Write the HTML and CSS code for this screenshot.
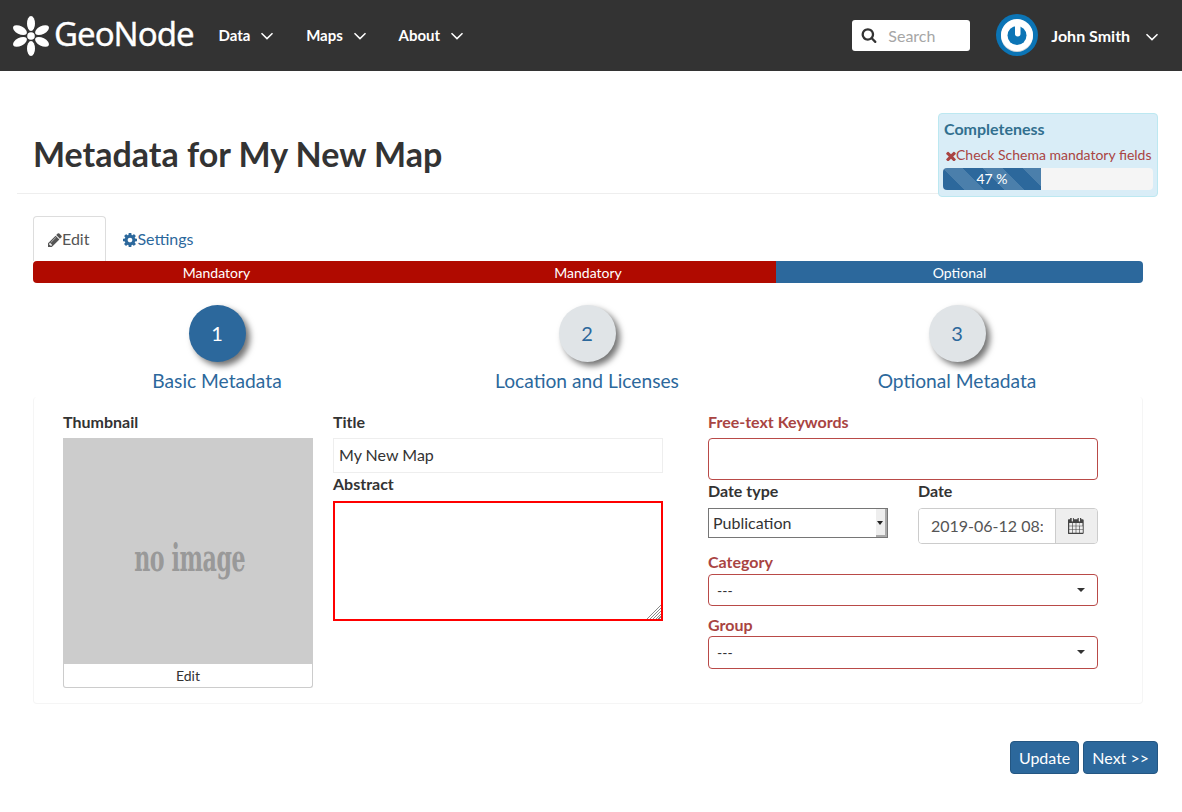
FILE: index.html

```html
<!DOCTYPE html>
<html lang="en">
<head>
  <meta charset="UTF-8" />
  <meta name="viewport" content="width=device-width, initial-scale=1.0" />
  <title>Metadata for My New Map</title>
  <link rel="stylesheet" href="styles.css">
</head>
<body>
  <header class="navbar">
    <a class="brand" href="#">
      <svg class="brand-mark" viewBox="0 0 38 40" aria-hidden="true">
        <g fill="#fff">
          <ellipse cx="19" cy="7.500" rx="4" ry="7.500" />
          <ellipse cx="19" cy="32.500" rx="4" ry="7.500" />
          <ellipse cx="19" cy="7.500" rx="4" ry="7.500" transform="rotate(62 19 20)" />
          <ellipse cx="19" cy="7.500" rx="4" ry="7.500" transform="rotate(118 19 20)" />
          <ellipse cx="19" cy="7.500" rx="4" ry="7.500" transform="rotate(242 19 20)" />
          <ellipse cx="19" cy="7.500" rx="4" ry="7.500" transform="rotate(298 19 20)" />
          <circle cx="19" cy="20" r="3.800" />
        </g>
      </svg>
      <span class="brand-name">GeoNode</span>
    </a>
    <nav class="nav-links">
      <a href="#">Data <svg class="chevron" viewBox="0 0 14 8"><path d="M1.5 1.2 7 6.6l5.5-5.4" /></svg></a>
      <a href="#">Maps <svg class="chevron" viewBox="0 0 14 8"><path d="M1.5 1.2 7 6.6l5.5-5.4" /></svg></a>
      <a href="#">About <svg class="chevron" viewBox="0 0 14 8"><path d="M1.5 1.2 7 6.6l5.5-5.4" /></svg></a>
    </nav>
    <div class="nav-right">
      <label class="search">
        <svg class="search-icon" viewBox="0 0 1792 1792"><path d="M1216 832q0-185-131.500-316.500t-316.500-131.500-316.500 131.500-131.500 316.500 131.500 316.500 316.500 131.500 316.500-131.500 131.500-316.500zm512 832q0 52-38 90t-90 38q-54 0-90-38l-343-342q-179 124-399 124-143 0-273.500-55.500t-225-150-150-225-55.500-273.500 55.500-273.500 150-225 225-150 273.500-55.500 273.500 55.500 225 150 150 225 55.500 273.500q0 220-124 399l343 343q37 37 37 90z" /></svg>
        <input type="text" placeholder="Search" />
      </label>
      <svg class="avatar" viewBox="0 0 42 42" aria-hidden="true">
        <circle cx="21" cy="21" r="21" fill="#0b74b5" />
        <circle cx="21" cy="22" r="16" fill="#cfd4d8" />
        <circle cx="21" cy="21" r="16" fill="#fff" />
        <circle cx="21" cy="21.500" r="9.500" fill="#0b74b5" />
        <rect x="19" y="5.500" width="5.500" height="17" rx="2.700" fill="#fff" />
      </svg>
      <a class="user" href="#">John Smith <svg class="chevron" viewBox="0 0 14 8"><path d="M1.5 1.2 7 6.6l5.5-5.4" /></svg></a>
    </div>
  </header>

  <div class="container">
    <div class="page-header">
      <h1>Metadata for My New Map</h1>
      <aside class="completeness">
        <h4>Completeness</h4>
        <p class="completeness-error">
          <svg class="icon" viewBox="280 280 1232 1296"><path d="M1490 1322q0 40-28 68l-136 136q-28 28-68 28t-68-28l-294-294-294 294q-28 28-68 28t-68-28l-136-136q-28-28-28-68t28-68l294-294-294-294q-28-28-28-68t28-68l136-136q28-28 68-28t68 28l294 294 294-294q28-28 68-28t68 28l136 136q28 28 28 68t-28 68l-294 294 294 294q28 28 28 68z" /></svg>Check Schema mandatory fields
        </p>
        <div class="progress"><div class="progress-bar" style="width: 46.700%">47 %</div></div>
      </aside>
    </div>

    <main class="content">
      <ul class="tabs">
        <li class="tab active">
          <a href="#"><svg class="icon" viewBox="128 128 1536 1536"><path d="M491 1536l91-91-235-235-91 91v107h128v128h107zm523-928q0-22-22-22-10 0-17 7l-542 542q-7 7-7 17 0 22 22 22 10 0 17-7l542-542q7-7 7-17zm-54-192l416 416-832 832h-416v-416zm683 96q0 53-37 90l-166 166-416-416 166-165q36-38 90-38 53 0 91 38l235 234q37 39 37 91z" /></svg>Edit</a>
        </li>
        <li class="tab">
          <a href="#"><svg class="icon" viewBox="128 128 1536 1536"><path d="M1152 896q0-106-75-181t-181-75-181 75-75 181 75 181 181 75 181-75 75-181zm512-109v222q0 12-8 23t-20 13l-185 28q-19 54-39 91 35 50 107 138 10 12 10 25t-9 23q-27 37-99 108t-94 71q-12 0-26-9l-138-108q-44 23-91 38-16 136-29 186-7 28-36 28h-222q-14 0-24.500-8.500t-11.500-21.500l-28-184q-49-16-90-37l-141 107q-10 9-25 9-14 0-25-11-126-114-165-168-7-10-7-23 0-12 8-23 15-21 51-66.500t54-70.500q-27-50-41-99l-183-27q-13-2-21-12.500t-8-23.500v-222q0-12 8-23t19-13l186-28q14-46 39-92-40-57-107-138-10-12-10-24 0-10 9-23 26-36 98.500-107.500t94.500-71.500q13 0 26 10l138 107q44-23 91-38 16-136 29-186 7-28 36-28h222q14 0 24.500 8.500t11.500 21.500l28 184q49 16 90 37l142-107q9-9 24-9 13 0 25 10 129 119 165 170 7 8 7 22 0 12-8 23-15 21-51 66.500t-54 70.500q26 50 41 98l183 28q13 2 21 12.500t8 23.500z" /></svg>Settings</a>
        </li>
      </ul>

      <div class="wizard-bar">
        <div class="wizard-seg seg-side mandatory">Mandatory</div>
        <div class="wizard-seg seg-middle mandatory">Mandatory</div>
        <div class="wizard-seg seg-side optional">Optional</div>
      </div>

      <div class="steps">
        <a class="step current" href="#"><span class="step-circle">1</span><span class="step-label">Basic Metadata</span></a>
        <a class="step" href="#"><span class="step-circle">2</span><span class="step-label">Location and Licenses</span></a>
        <a class="step" href="#"><span class="step-circle">3</span><span class="step-label">Optional Metadata</span></a>
      </div>

      <form class="panel">
        <div class="col-thumb">
          <label class="field-label">Thumbnail</label>
          <div class="thumb"><span class="no-image">no image</span></div>
          <button type="button" class="thumb-edit">Edit</button>
        </div>

        <div class="col-main">
          <label class="field-label">Title</label>
          <input class="input-title" type="text" value="My New Map" />
          <label class="field-label label-abstract">Abstract</label>
          <textarea class="input-abstract"></textarea>
        </div>

        <div class="col-side">
          <label class="field-label required">Free-text Keywords</label>
          <input class="input-keywords" type="text" />

          <div class="date-row">
            <div class="date-type">
              <label class="field-label">Date type</label>
              <div class="plain-select">
                <span>Publication</span>
                <span class="plain-select-arrow"></span>
              </div>
            </div>
            <div class="date-value">
              <label class="field-label">Date</label>
              <div class="date-group">
                <input type="text" value="2019-06-12 08:00 am" />
                <span class="date-addon">
                  <svg class="icon" viewBox="64 128 1664 1664"><path d="M192 1664h288v-288h-288v288zm352 0h320v-288h-320v288zm-352-352h288v-320h-288v320zm352 0h320v-320h-320v320zm-352-384h288v-288h-288v288zm736 736h320v-288h-320v288zm-384-736h320v-288h-320v288zm768 736h288v-288h-288v288zm-384-352h320v-320h-320v320zm-352-864v-288q0-13-9.500-22.500t-22.500-9.500h-64q-13 0-22.500 9.500t-9.500 22.500v288q0 13 9.500 22.500t22.500 9.500h64q13 0 22.500-9.500t9.500-22.500zm736 864h288v-320h-288v320zm-384-384h320v-288h-320v288zm352 0h288v-288h-288v288zm32-480v-288q0-13-9.500-22.500t-22.500-9.500h-64q-13 0-22.500 9.500t-9.500 22.500v288q0 13 9.500 22.500t22.500 9.500h64q13 0 22.500-9.500t9.500-22.500zm384-64v1280q0 52-38 90t-90 38h-1408q-52 0-90-38t-38-90v-1280q0-52 38-90t90-38h128v-96q0-66 47-113t113-47h64q66 0 113 47t47 113v96h384v-96q0-66 47-113t113-47h64q66 0 113 47t47 113v96h128q52 0 90 38t38 90z" /></svg>
                </span>
              </div>
            </div>
          </div>

          <label class="field-label required label-category">Category</label>
          <div class="drop">---</div>
          <label class="field-label required label-group">Group</label>
          <div class="drop">---</div>
        </div>
      </form>
    </main>

    <div class="actions">
      <button type="button" class="btn">Update</button>
      <button type="button" class="btn">Next &gt;&gt;</button>
    </div>
  </div>
</body>
</html>
```

FILE: styles.css

```css
* {
  box-sizing: border-box;
}
body {
  margin: 0;
  font-family: Lato, "Liberation Sans", sans-serif;
  font-size: 16px;
  color: #333;
  background: #fff;
}
a {
  text-decoration: none;
}

/* navbar */
.navbar {
  display: flex;
  align-items: center;
  height: 71px;
  padding: 0 23px 1px 12px;
  background: #333;
}
.brand {
  display: flex;
  align-items: center;
  color: #fff;
  margin-top: 1px;
}
.brand-mark {
  width: 38px;
  height: 40px;
}
.brand-name {
  margin-left: 4px;
  font-family: "Noto Sans", "Open Sans", sans-serif;
  font-size: 33px;
  letter-spacing: -1px;
  line-height: 40px;
  margin-top: -3px;
  -webkit-text-stroke: 0.3px #fff;
}
.nav-links {
  display: flex;
  gap: 32px;
  margin-left: 25px;
}
.nav-links a {
  color: #fff;
  font-weight: 700;
  font-size: 15px;
}
.user {
  color: #fff;
  font-weight: 700;
  font-size: 16px;
}
.chevron {
  width: 14px;
  height: 8px;
  margin-left: 6px;
  fill: none;
  stroke: #fff;
  stroke-width: 1.5;
  vertical-align: 1px;
}
.nav-right {
  display: flex;
  align-items: center;
  margin-left: auto;
}
.search {
  display: flex;
  align-items: center;
  width: 118px;
  height: 31px;
  padding-left: 9px;
  background: #fff;
  border-radius: 3px;
}
.search-icon {
  width: 16px;
  height: 16px;
  fill: #333;
  flex: none;
}
.search input {
  width: 70px;
  margin-left: 11px;
  border: 0;
  padding: 0;
  outline: 0;
  font: inherit;
}
.search input::placeholder {
  color: #a6a6a6;
}
.avatar {
  width: 42px;
  height: 42px;
  margin-left: 26px;
}
.user {
  margin-left: 13px;
}
.user .chevron {
  margin-left: 11px;
}

/* page head */
.container {
  width: 1141px;
  margin-left: 17px;
}
.page-header {
  display: flex;
  justify-content: space-between;
  align-items: flex-start;
  height: 123px;
  padding: 42px 0 0 16px;
  border-bottom: 1px solid #eee;
}
.page-header h1 {
  margin: 19px 0 0;
  font-size: 34px;
  line-height: 44px;
  font-weight: 700;
}
.completeness {
  position: relative;
  z-index: 1;
  width: 220px;
  height: 84px;
  padding: 5px 4px;
  background: #d9edf7;
  border: 1px solid #bce8f1;
  border-radius: 4px;
}
.completeness h4 {
  margin: 0 0 0 1px;
  font-size: 16px;
  line-height: 20px;
  color: #31708f;
}
.completeness-error {
  margin: 8px 0 5px 3px;
  font-size: 14px;
  line-height: 16px;
  color: #a94442;
  white-space: nowrap;
}
.completeness-error .icon {
  width: 10px;
  height: 10.500px;
  fill: #a94442;
  vertical-align: -1px;
}
.progress {
  height: 22px;
  background: #f5f5f5;
  border-radius: 4px;
  overflow: hidden;
}
.progress-bar {
  height: 100%;
  font-size: 14px;
  line-height: 22px;
  text-align: center;
  color: #fff;
  background-color: #2c689c;
  background-image: linear-gradient(45deg, rgba(255,255,255,.15) 25%, transparent 25%, transparent 50%, rgba(255,255,255,.15) 50%, rgba(255,255,255,.15) 75%, transparent 75%, transparent);
  background-size: 40px 40px;
}

/* tabs and wizard */
.content {
  padding: 22px 15px 0 16px;
}
.tabs {
  display: flex;
  gap: 2px;
  margin: 0;
  padding: 0;
  list-style: none;
}
.tab {
  height: 45px;
  padding: 0 16px 0 14px;
  line-height: 43px;
  border: 1px solid transparent;
  border-bottom: 0;
  border-radius: 4px 4px 0 0;
}
.tab a {
  color: #2c689c;
}
.tab .icon {
  width: 14px;
  height: 14px;
  fill: currentColor;
  vertical-align: -2px;
}
.tab.active {
  border-color: #ddd;
}
.tab.active a {
  color: #555;
}
.wizard-bar {
  display: flex;
  height: 22px;
  border-radius: 4px;
  overflow: hidden;
  font-size: 14px;
  line-height: 24px;
  color: #fff;
  text-align: center;
}
.seg-side {
  width: 367px;
}
.seg-middle {
  width: 376px;
}
.mandatory {
  background: #b00a00;
}
.optional {
  background: #2c689c;
}
.steps {
  display: grid;
  grid-template-columns: repeat(3, 1fr);
  margin: 22px 1px 0 -1px;
}
.step {
  display: flex;
  flex-direction: column;
  align-items: center;
  color: #2c689c;
}
.step-circle {
  width: 57px;
  height: 57px;
  border-radius: 50%;
  background: #e0e4e7;
  box-shadow: 4px 4px 6px rgba(0,0,0,.55);
  font-size: 20px;
  line-height: 57px;
  text-align: center;
}
.step.current .step-circle {
  background: #2c689c;
  color: #fff;
}
.step-label {
  margin-top: 6px;
  font-size: 19.200px;
  line-height: 26px;
}

/* form */
.panel {
  display: flex;
  height: 307px;
  margin-top: 3px;
  padding: 16px 29px 0;
  border: 1px solid #f5f5f5;
  border-top: 0;
  border-radius: 4px;
}
.field-label {
  display: block;
  font-weight: 700;
  line-height: 18px;
}
.field-label.required {
  color: #a94442;
}
.col-thumb {
  width: 250px;
}
.thumb {
  display: flex;
  align-items: center;
  justify-content: center;
  height: 226px;
  margin-top: 7px;
  background: #ccc;
}
.no-image {
  margin: 13px 0 0 4px;
  font-family: "DejaVu Serif", "Liberation Mono", serif;
  font-weight: 700;
  font-size: 27px;
  letter-spacing: -0.5px;
  color: #999;
  transform: scale(0.82, 1.4);
  white-space: nowrap;
}
.thumb-edit {
  display: block;
  width: 100%;
  height: 24px;
  padding: 0;
  background: #fff;
  border: 1px solid #ccc;
  border-top: 0;
  border-radius: 0 0 3px 3px;
  font: inherit;
  font-size: 14px;
  color: #333;
}
.col-main {
  width: 330px;
  margin-left: 20px;
}
.input-title {
  display: block;
  width: 100%;
  height: 35px;
  margin-top: 7px;
  padding: 0 5px 2px;
  border: 1px solid #eee;
  outline: 0;
  font: inherit;
  color: #333;
}
.label-abstract {
  margin-top: 2px;
}
.input-abstract {
  display: block;
  width: 100%;
  height: 120px;
  margin-top: 8px;
  border: 2px solid #f00;
  outline: 0;
}
.input-abstract::-webkit-resizer {
  background:
    linear-gradient(135deg, #fff 50%, transparent 50%),
    repeating-linear-gradient(135deg, #fff 0 1px, #888 1px 2px);
}
.col-side {
  width: 390px;
  margin-left: 45px;
}
.input-keywords {
  display: block;
  width: 100%;
  height: 42px;
  margin-top: 7px;
  border: 1px solid #b94a48;
  border-radius: 4px;
  outline: 0;
}
.date-row {
  display: flex;
  gap: 30px;
  margin-top: 2px;
}
.date-type {
  width: 180px;
}
.date-value {
  width: 180px;
}
.date-row .field-label {
  margin-bottom: 8px;
}
.plain-select {
  display: flex;
  align-items: center;
  justify-content: space-between;
  height: 30px;
  padding-left: 4px;
  border: 1px solid #767676;
}
.plain-select > span:first-child {
  margin-top: -2px;
}
.plain-select-arrow {
  position: relative;
  width: 11px;
  height: 28px;
  border-right: 2px solid #aaa;
  border-bottom: 2px solid #aaa;
  background: #eee;
}
.plain-select-arrow::after {
  content: "";
  position: absolute;
  left: 1px;
  top: 12px;
  border: 3px solid transparent;
  border-top: 4px solid #222;
  border-bottom: 0;
}
.date-group {
  display: flex;
  height: 36px;
  border: 1px solid #ccc;
  border-radius: 4px;
  overflow: hidden;
}
.date-group input {
  flex: 1;
  min-width: 0;
  padding: 0 12px 2px;
  border: 0;
  outline: 0;
  font: inherit;
  color: #555;
}
.date-addon {
  display: flex;
  align-items: center;
  justify-content: center;
  width: 42px;
  padding-right: 2px;
  background: #eee;
  border-left: 1px solid #ccc;
}
.date-addon .icon {
  width: 16px;
  height: 16px;
  fill: #444;
}
.label-category {
  margin-top: 9px;
}
.label-group {
  margin-top: 10px;
}
.drop {
  position: relative;
  height: 32px;
  margin-top: 3px;
  padding-left: 8px;
  border: 1px solid #b94a48;
  border-radius: 4px;
  font-size: 14px;
  line-height: 32px;
}
.label-group + .drop {
  height: 33px;
  margin-top: 2px;
}
.drop::after {
  content: "";
  position: absolute;
  right: 12px;
  top: 13px;
  border: 4px solid transparent;
  border-top: 4px solid #333;
  border-bottom: 0;
}

/* bottom buttons */
.actions {
  display: flex;
  justify-content: flex-end;
  gap: 4px;
  margin-top: 37px;
}
.btn {
  height: 33px;
  padding: 0 8px;
  background: #2c689c;
  border: 1px solid #245682;
  border-radius: 4px;
  color: #fff;
  font: inherit;
}
```
